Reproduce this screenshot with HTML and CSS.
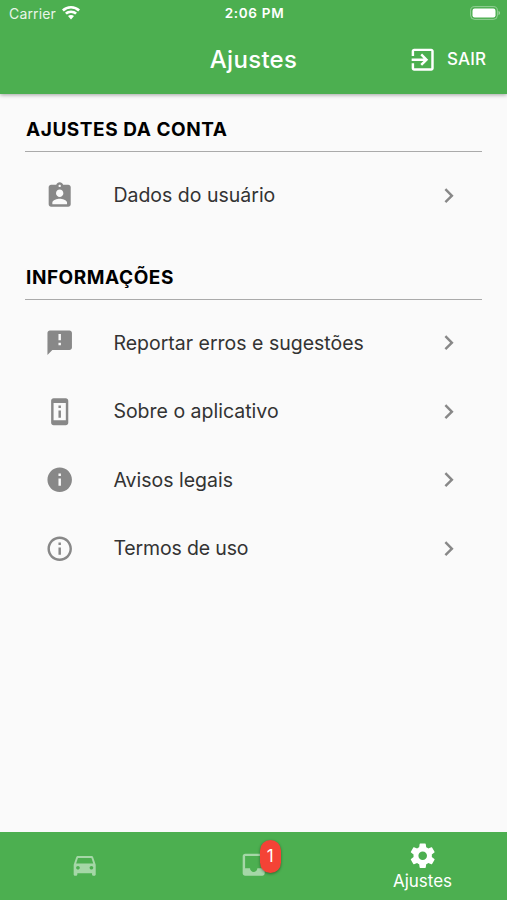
FILE: index.html
```html
<!DOCTYPE html>
<html lang="pt-BR">
<head>
<meta charset="utf-8">
<title>Ajustes</title>
<link rel="stylesheet" href="styles.css">
</head>
<body>
<div class="app">
  <header class="header">
    <div class="status">
      <div class="status-left"><span class="carrier">Carrier</span>
        <svg class="wifi" viewBox="0 0 18 14"><path d="M9 0C5.500 0 2.300 1.400 0 3.600L1.800 5.400A10.400 10.400 0 0 1 16.200 5.400L18 3.600C15.700 1.400 12.500 0 9 0ZM9 4.500C6.700 4.500 4.600 5.400 3 6.800L4.800 8.600A6.200 6.200 0 0 1 13.200 8.600L15 6.800C13.400 5.400 11.300 4.500 9 4.500ZM9 9C7.800 9 6.800 9.400 6 10.100L9 13.400 12 10.100C11.200 9.400 10.200 9 9 9Z"/></svg>
      </div>
      <span class="time">2:06 PM</span>
      <svg class="battery" viewBox="0 0 30 14"><rect x=".6" y=".6" width="26.800" height="12.800" rx="4" fill="none" stroke="#fff" stroke-opacity=".4"/><rect x="2.500" y="2.500" width="23" height="9" rx="2.200"/><path d="M28.500 4.800c2 .8 2 3.600 0 4.400z" opacity=".45"/></svg>
    </div>
    <div class="appbar">
      <h1 class="title">Ajustes</h1>
      <div class="logout">
        <svg class="icon" viewBox="0 0 24 24"><path d="M10.090 15.590L11.500 17l5-5-5-5-1.410 1.410L12.670 11H3v2h9.670l-2.580 2.590zM19 3H5c-1.110 0-2 .9-2 2v4h2V5h14v14H5v-4H3v4c0 1.100.89 2 2 2h14c1.100 0 2-.9 2-2V5c0-1.100-.9-2-2-2z"/></svg>
        <span class="logout-label">SAIR</span>
      </div>
    </div>
  </header>

  <main class="content">
    <section class="section">
      <h2 class="heading">AJUSTES DA CONTA</h2>
      <div class="item">
        <svg class="icon" viewBox="0 0 24 24"><path d="M19 3h-4.180C14.400 1.840 13.300 1 12 1c-1.300 0-2.400.84-2.820 2H5c-1.100 0-2 .9-2 2v14c0 1.100.9 2 2 2h14c1.100 0 2-.9 2-2V5c0-1.100-.9-2-2-2zm-7 0c.55 0 1 .45 1 1s-.45 1-1 1-1-.45-1-1 .45-1 1-1zm0 4c1.660 0 3 1.340 3 3s-1.340 3-3 3-3-1.340-3-3 1.340-3 3-3zm6 12H6v-1.400c0-2 4-3.100 6-3.100s6 1.100 6 3.100V19z"/></svg>
        <span class="label">Dados do usuário</span>
        <svg class="chevron" viewBox="0 0 24 24"><path d="M10 6L8.590 7.410 13.170 12l-4.580 4.590L10 18l6-6z"/></svg>
      </div>
    </section>
    <section class="section">
      <h2 class="heading">INFORMAÇÕES</h2>
      <div class="item">
        <svg class="icon" viewBox="0 0 24 24"><path d="M20 2H4c-1.100 0-1.990.9-1.990 2L2 22l4-4h14c1.100 0 2-.9 2-2V4c0-1.100-.9-2-2-2zm-7 12h-2v-2h2v2zm0-4h-2V5h2v5z"/></svg>
        <span class="label">Reportar erros e sugestões</span>
        <svg class="chevron" viewBox="0 0 24 24"><path d="M10 6L8.590 7.410 13.170 12l-4.580 4.590L10 18l6-6z"/></svg>
      </div>
      <div class="item">
        <svg class="icon" viewBox="0 0 24 24"><path d="M13 7h-2v2h2V7zm0 4h-2v6h2v-6zm4-9.990L7 1c-1.100 0-2 .9-2 2v18c0 1.100.9 2 2 2h10c1.100 0 2-.9 2-2V3c0-1.100-.9-1.990-2-1.990zM17 19H7V5h10v14z"/></svg>
        <span class="label">Sobre o aplicativo</span>
        <svg class="chevron" viewBox="0 0 24 24"><path d="M10 6L8.590 7.410 13.170 12l-4.580 4.590L10 18l6-6z"/></svg>
      </div>
      <div class="item">
        <svg class="icon" viewBox="0 0 24 24"><path d="M12 2C6.480 2 2 6.480 2 12s4.480 10 10 10 10-4.480 10-10S17.520 2 12 2zm1 15h-2v-6h2v6zm0-8h-2V7h2v2z"/></svg>
        <span class="label">Avisos legais</span>
        <svg class="chevron" viewBox="0 0 24 24"><path d="M10 6L8.590 7.410 13.170 12l-4.580 4.590L10 18l6-6z"/></svg>
      </div>
      <div class="item">
        <svg class="icon" viewBox="0 0 24 24"><path d="M11 17h2v-6h-2v6zm1-15C6.480 2 2 6.480 2 12s4.480 10 10 10 10-4.480 10-10S17.520 2 12 2zm0 18c-4.410 0-8-3.590-8-8s3.590-8 8-8 8 3.590 8 8-3.590 8-8 8zM11 9h2V7h-2v2z"/></svg>
        <span class="label terms">Termos de uso</span>
        <svg class="chevron" viewBox="0 0 24 24"><path d="M10 6L8.590 7.410 13.170 12l-4.580 4.590L10 18l6-6z"/></svg>
      </div>
    </section>
  </main>

  <nav class="tabs">
    <div class="tab">
      <svg class="icon dim" viewBox="0 0 24 24"><path d="M18.920 6.010C18.720 5.420 18.160 5 17.500 5h-11c-.66 0-1.210.42-1.420 1.010L3 12v8c0 .55.45 1 1 1h1c.55 0 1-.45 1-1v-1h12v1c0 .55.45 1 1 1h1c.55 0 1-.45 1-1v-8l-2.080-5.990zM6.500 16c-.83 0-1.500-.67-1.500-1.500S5.670 13 6.500 13s1.500.67 1.500 1.500S7.330 16 6.500 16zm11 0c-.83 0-1.500-.67-1.500-1.500s.67-1.500 1.500-1.500 1.500.67 1.500 1.500-.67 1.500-1.500 1.500zM5 11l1.500-4.500h11L19 11H5z"/></svg>
    </div>
    <div class="tab">
      <div class="badged">
        <svg class="icon dim" viewBox="0 0 24 24"><path d="M19 3H4.990c-1.110 0-1.980.9-1.980 2L3 19c0 1.100.88 2 1.990 2H19c1.100 0 2-.9 2-2V5c0-1.100-.9-2-2-2zm0 12h-4c0 1.660-1.350 3-3 3s-3-1.340-3-3H4.990V5H19v10z"/></svg>
        <span class="badge">1</span>
      </div>
    </div>
    <div class="tab active">
      <svg class="icon" viewBox="0 0 24 24"><path d="M19.430 12.980c.04-.32.07-.64.07-.98s-.03-.66-.07-.98l2.110-1.650c.19-.15.24-.42.12-.64l-2-3.460c-.12-.22-.39-.3-.61-.22l-2.490 1c-.52-.4-1.080-.73-1.690-.98l-.38-2.650C14.460 2.180 14.250 2 14 2h-4c-.25 0-.46.18-.49.42l-.38 2.650c-.61.25-1.170.59-1.690.98l-2.490-1c-.23-.09-.49 0-.61.22l-2 3.460c-.13.22-.07.49.12.64l2.110 1.650c-.04.32-.07.65-.07.98s.03.66.07.98l-2.110 1.650c-.19.15-.24.42-.12.64l2 3.460c.12.22.39.3.61.22l2.490-1c.52.4 1.080.73 1.690.98l.38 2.650c.03.24.24.42.49.42h4c.25 0 .46-.18.49-.42l.38-2.650c.61-.25 1.170-.59 1.690-.98l2.490 1c.23.09.49 0 .61-.22l2-3.460c.12-.22.07-.49-.12-.64l-2.110-1.650zM12 15.500c-1.930 0-3.500-1.570-3.500-3.500s1.570-3.500 3.500-3.500 3.500 1.570 3.500 3.500-1.570 3.500-3.500 3.500z"/></svg>
      <span class="tab-label">Ajustes</span>
    </div>
  </nav>
</div>
</body>
</html>
```

FILE: styles.css
```css
* { box-sizing: border-box; }
body {
  margin: 0;
  font-family: Inter, "Liberation Sans", sans-serif;
  background: #fafafa;
}
svg { display: block; fill: currentColor; flex: none; }
.app { width: 507px; height: 900px; display: flex; flex-direction: column; }
.header {
  height: 94px;
  background: #4caf50;
  color: #fff;
  box-shadow: 0 1px 4px rgba(0, 0, 0, .36);
}
.status {
  height: 26px;
  display: grid;
  grid-template-columns: 1fr auto 1fr;
  align-items: center;
  padding: 0 7px 0 9px;
}
.status-left { display: flex; align-items: center; gap: 6px; }
.carrier { font-size: 14px; letter-spacing: .15px; opacity: .88; }
.wifi { width: 18px; height: 14px; }
.time { font-size: 13.500px; font-weight: 600; letter-spacing: .7px; }
.battery { width: 30px; height: 14px; justify-self: end; }
.appbar {
  height: 67px;
  display: grid;
  grid-template-columns: 1fr auto 1fr;
  align-items: center;
  padding: 0 21px 0 21px;
}
.title { grid-column: 2; margin: 0; font-size: 24px; font-weight: 500; letter-spacing: .3px; }
.logout { display: flex; align-items: center; justify-content: flex-end; gap: 10px; }
.logout-label { font-size: 17px; font-weight: 500; letter-spacing: .1px; }
.icon { width: 29.400px; height: 29.400px; }
.content { flex: 1; padding: 24px 25px 0; }
.section { margin-bottom: 36px; }
.heading {
  margin: 0 0 9px;
  height: 34px;
  padding-left: 1px;
  border-bottom: 1px solid #aaa;
  font-size: 19px;
  line-height: 24px;
  letter-spacing: .55px;
  font-weight: 700;
  color: #000;
  white-space: nowrap;
}
.item {
  height: 68.500px;
  padding: 0 19px 0 20px;
  display: flex;
  align-items: center;
  color: #888;
}
.label { flex: 1; margin-left: 39px; font-size: 19.500px; color: #333; white-space: nowrap; }
.terms { letter-spacing: -.15px; }
.chevron { width: 29.400px; height: 29.400px; }
.tabs {
  height: 68.500px;
  display: grid;
  grid-template-columns: repeat(3, 1fr);
  background: #4caf50;
  color: #fff;
}
.tab { display: flex; flex-direction: column; align-items: center; padding-top: 18px; }
.dim { color: #a5d7a7; }
.active { padding-top: 9px; }
.tab-label { font-size: 17px; line-height: 22px; }
.badged { position: relative; }
.badge {
  position: absolute;
  left: 21px;
  top: -10px;
  width: 21px;
  height: 33px;
  border-radius: 10.500px;
  background: #f44336;
  box-shadow: 0 1px 3px rgba(0, 0, 0, .4);
  font-size: 17px;
  line-height: 33px;
  text-align: center;
}
```
